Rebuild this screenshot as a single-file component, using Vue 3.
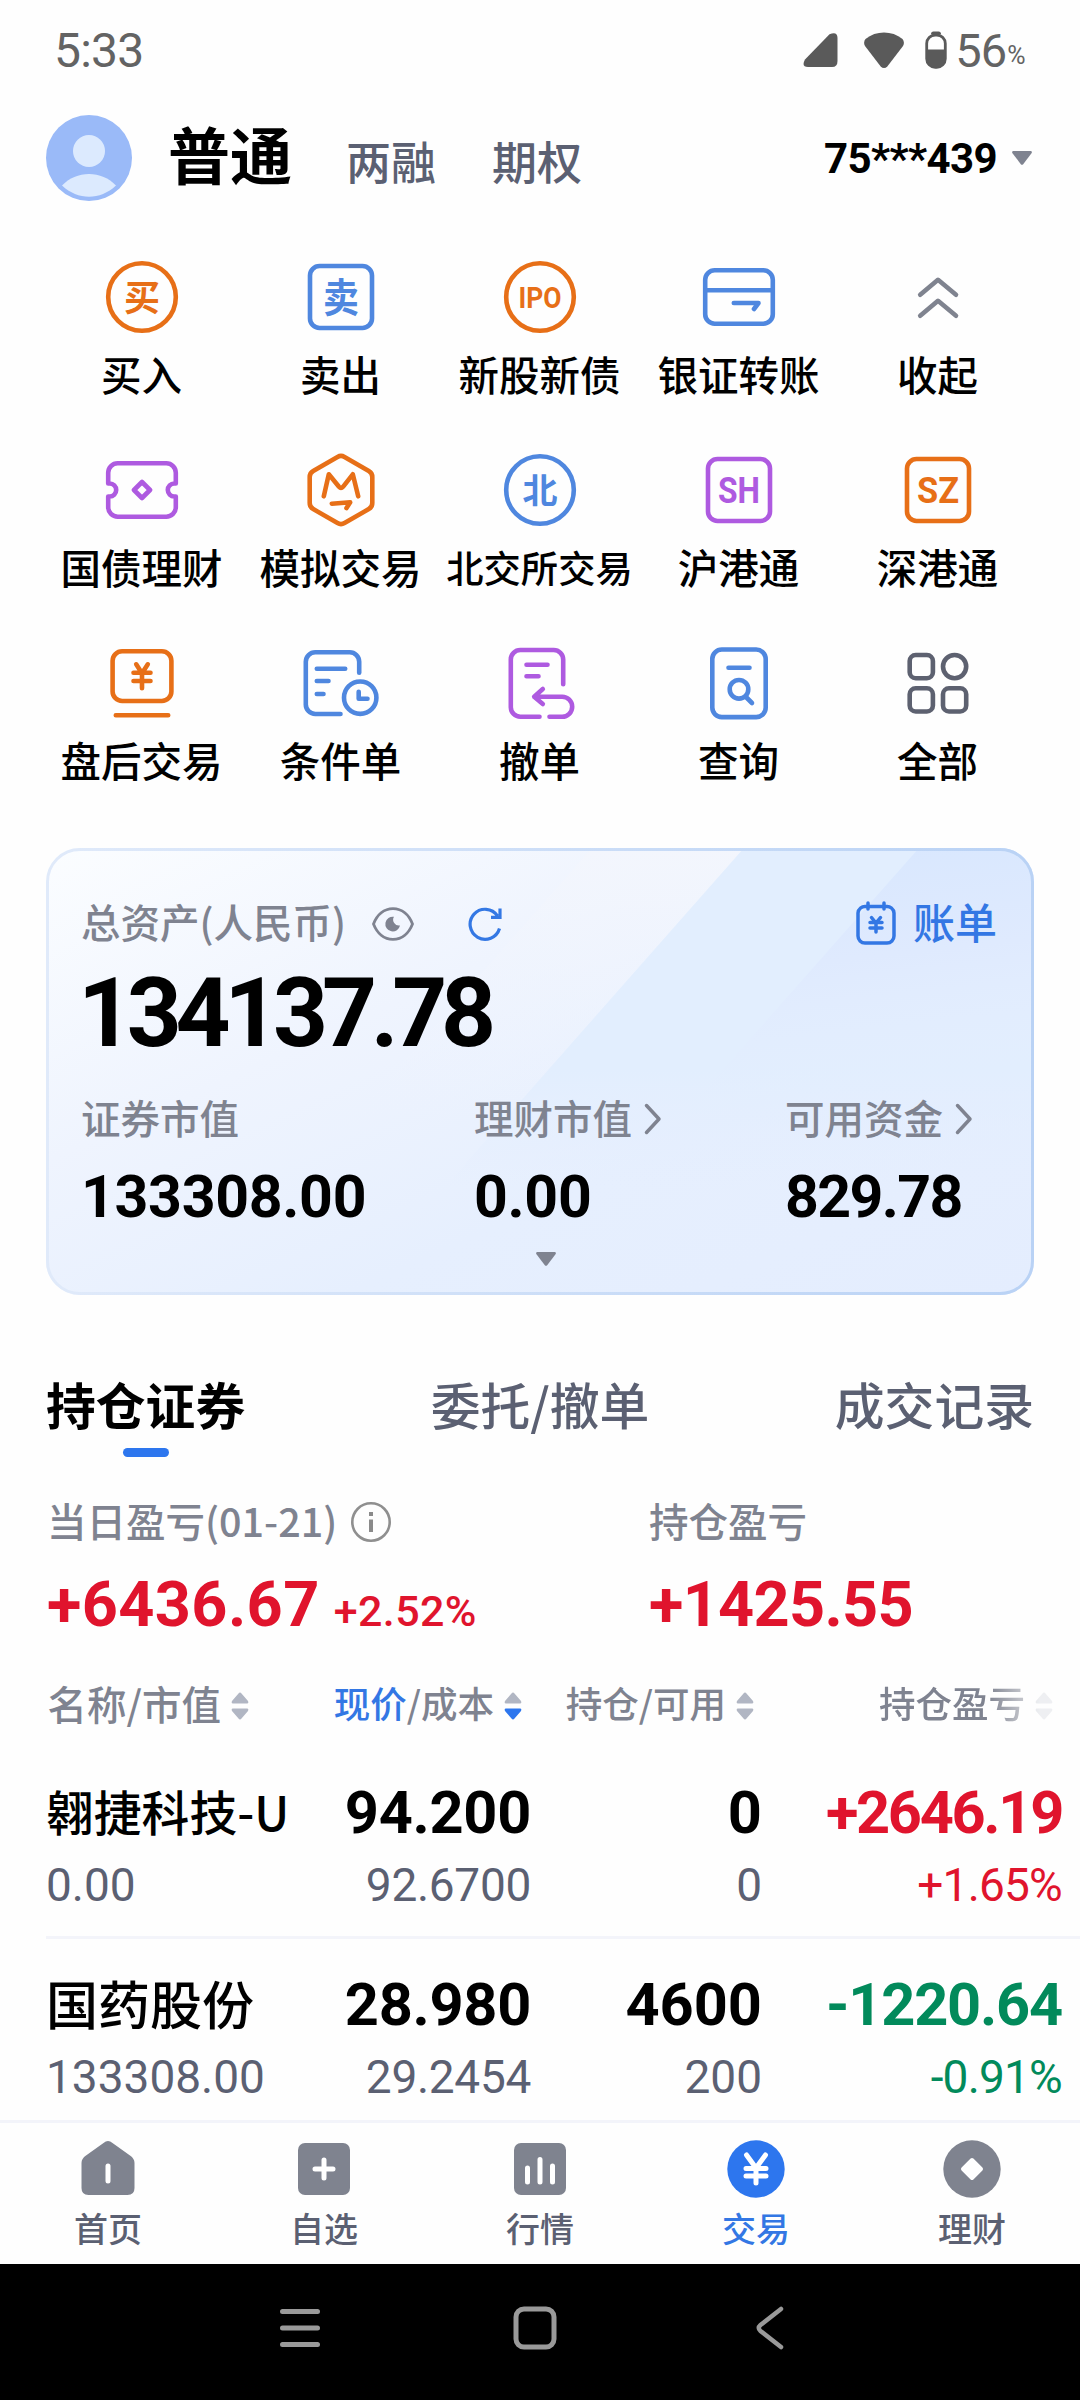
<template>
  <div class="trade-page">
    <!-- Status Bar -->
    <div class="status-bar">
      <span class="status-time">5:33</span>
      <div class="status-icons">
        <svg class="signal-icon" viewBox="0 0 36 36">
          <path d="M26.5 2.2Q34.5-1 34.5 6V29Q34.5 35 29 35H5Q-2 35 2 27.500Z" />
        </svg>
        <svg class="wifi-icon" viewBox="0 0 42 38">
          <path d="M2.500 8C13-.6 29-.6 39.500 8Q42 11 40 15L24.500 35.200Q21 39 17.500 35.200L2 15Q0 11 2.500 8Z" />
        </svg>
        <svg class="battery-icon" viewBox="0 0 22 38">
          <path d="M6 3Q6 .5 8.500 .5h5Q16 .5 16 3Z" />
          <rect x="1.700" y="4" width="18.600" height="32.300" rx="8.500" fill="none" stroke="#5a5a5a" stroke-width="2.800" />
          <path d="M2 18.500H20V28a8.500 8.500 0 0 1-8.500 8.500h-1A8.500 8.500 0 0 1 2 28Z" />
        </svg>
        <span class="battery-level">56</span>
        <span class="battery-unit">%</span>
      </div>
    </div>

    <!-- Account Header -->
    <div class="header">
      <svg class="avatar" viewBox="0 0 86 86">
        <circle cx="43" cy="43" r="43" fill="#9abaf8" />
        <circle cx="43" cy="36" r="16" fill="#dceafe" />
        <path d="M16 70.500C30 55 56 55 70 70.500C54 85.500 32 85.500 16 70.500Z" fill="#dceafe" />
      </svg>
      <span class="account-type active">普通</span>
      <span class="account-type margin">两融</span>
      <span class="account-type option">期权</span>
      <div class="account-id">
        <span>75***439</span>
        <svg class="triangle" viewBox="0 0 20 14"><path d="M1 0H19Q20.500 .8 19.500 2.200L11.200 13.200Q10 14.500 8.800 13.200L.5 2.200Q-.5 .8 1 0Z" /></svg>
      </div>
    </div>

    <!-- Tool Grid -->
    <div class="tool-grid">
      <div v-for="tool in tools" :key="tool.label" class="tool" :class="tool.color">
        <svg class="tool-icon" viewBox="0 0 80 80">
          <rect
            v-for="(r, i) in tool.rects"
            :key="'r' + i"
            :x="r[0]"
            :y="r[1]"
            :width="r[2]"
            :height="r[3]"
            :rx="r[4]"
          />
          <circle v-for="(c, i) in tool.circles" :key="'c' + i" :cx="c[0]" :cy="c[1]" :r="c[2]" />
          <path v-if="tool.path" :d="tool.path" />
          <text
            v-if="tool.text"
            class="tool-glyph"
            x="40"
            :y="tool.text.y"
            :font-size="tool.text.size"
            :textLength="tool.text.width"
            lengthAdjust="spacingAndGlyphs"
          >{{ tool.text.value }}</text>
        </svg>
        <span class="tool-label" :class="{ small: tool.label.length > 4 }">{{ tool.label }}</span>
      </div>
    </div>

    <!-- Asset Card -->
    <div class="asset-card">
      <svg class="card-bg" viewBox="0 0 988 447" preserveAspectRatio="none">
        <defs>
          <linearGradient id="base" x1="0" y1="0" x2="1" y2="1">
            <stop offset="0" stop-color="#fbfdff" />
            <stop offset=".35" stop-color="#eff4fe" />
            <stop offset=".65" stop-color="#e6effe" />
            <stop offset="1" stop-color="#e4edfe" />
          </linearGradient>
          <linearGradient id="bandA" x1="0" y1="0" x2="0" y2="1">
            <stop offset="0" stop-color="#f3f6fd" />
            <stop offset="1" stop-color="#edf3fe" stop-opacity="0" />
          </linearGradient>
          <linearGradient id="bandB" x1="0" y1="0" x2="0" y2="1">
            <stop offset="0" stop-color="#e2eefe" />
            <stop offset=".65" stop-color="#e2eefe" />
            <stop offset="1" stop-color="#e4edfe" stop-opacity="0" />
          </linearGradient>
          <linearGradient id="bandC" x1="0" y1="0" x2=".15" y2="1">
            <stop offset="0" stop-color="#d8e7fe" />
            <stop offset=".5" stop-color="#dfeafe" />
            <stop offset="1" stop-color="#e4edfe" stop-opacity="0" />
          </linearGradient>
          <linearGradient id="edge" x1="0" y1="0" x2="1" y2="0">
            <stop offset="0" stop-color="#e0eafa" />
            <stop offset="1" stop-color="#b9d2f5" />
          </linearGradient>
          <clipPath id="cardShape"><rect width="988" height="447" rx="34" /></clipPath>
        </defs>
        <g clip-path="url(#cardShape)">
          <rect width="988" height="447" fill="url(#base)" />
          <path d="M546 0H698L458 272H306Z" fill="url(#bandA)" />
          <path d="M698 0H988V340H398Z" fill="url(#bandB)" />
          <path d="M873 0H988V250H652Z" fill="url(#bandC)" />
        </g>
        <rect x="1.500" y="1.500" width="985" height="444" rx="32.500" fill="none" stroke="url(#edge)" stroke-width="3" />
      </svg>

      <div class="card-content">
        <div class="card-top">
          <span class="card-label">总资产(人民币)</span>
          <svg class="eye-icon" viewBox="0 0 42 34">
            <path d="M1.500 17C5 8 12 1.600 21 1.600S37 8 40.500 17C37 26 30 32.400 21 32.400S5 26 1.500 17Z" fill="none" stroke="#7f8390" stroke-width="2.800" />
            <path d="M22 9.800A7.400 7.400 0 1 0 28 18.500A5.800 5.800 0 0 1 22 9.800Z" fill="#7f8390" />
          </svg>
          <svg class="refresh-icon" viewBox="0 0 34 36">
            <path d="M31.500 22.500A15 15 0 1 1 29.500 9.800M32 2.500V11.300H23" />
          </svg>
          <div class="bill">
            <svg class="bill-icon" viewBox="0 0 40 44">
              <path d="M10 5.500A7 7 0 0 0 2 12V35A7 7 0 0 0 9 42H31A7 7 0 0 0 38 35V12A7 7 0 0 0 30 5.500M10 5.500H30M12 2V8M28 2V8" />
              <path d="M15.500 16.500L20 22L24.500 16.500M20 22V31M14 21.500H26M14 27H26" />
            </svg>
            <span>账单</span>
          </div>
        </div>
        <div class="total">134137.78</div>
        <div class="asset-stats">
          <div v-for="stat in stats" :key="stat.label" class="stat">
            <div class="stat-label">
              <span>{{ stat.label }}</span>
              <svg v-if="stat.link" class="chevron" viewBox="0 0 18 32"><path d="M2.500 2.500L15 16L2.500 29.500" /></svg>
            </div>
            <div class="stat-value" :class="{ tight: stat.tight }">{{ stat.value }}</div>
          </div>
        </div>
        <svg class="triangle expand" viewBox="0 0 20 14"><path d="M1 0H19Q20.500 .8 19.500 2.200L11.200 13.200Q10 14.500 8.800 13.200L.5 2.200Q-.5 .8 1 0Z" /></svg>
      </div>
    </div>

    <!-- Tabs -->
    <div class="tabs">
      <div class="tab active">持仓证券</div>
      <div class="tab">委托/撤单</div>
      <div class="tab">成交记录</div>
    </div>

    <!-- Profit Summary -->
    <div class="summary">
      <div class="summary-day">
        <div class="summary-label">
          <span>当日盈亏(01-21)</span>
          <svg class="info-icon" viewBox="0 0 40 40">
            <circle cx="20" cy="20" r="18.700" fill="none" stroke="#8f8f8f" stroke-width="2.600" />
            <path d="M18 10h4v4h-4zM18 17.500h4V30h-4z" fill="#8a8a8a" />
          </svg>
        </div>
        <div class="summary-value">
          <span class="amount">+6436.67</span>
          <span class="percent">+2.52%</span>
        </div>
      </div>
      <div>
        <div class="summary-label">持仓盈亏</div>
        <div class="summary-value"><span class="amount tight">+1425.55</span></div>
      </div>
    </div>

    <!-- Holdings -->
    <div class="table-head">
      <div v-for="col in columns" :key="col.name" class="head-cell" :class="col.name">
        <span><em v-if="col.active">{{ col.active }}</em>{{ col.label }}</span>
        <svg class="sort-icon" viewBox="0 0 18 28">
          <path d="M7.500 1.500Q9-.6 10.500 1.500L17 9Q18 11.500 16 11.500H2Q0 11.500 1 9Z" />
          <path :class="{ on: col.active }" d="M7.500 26.500Q9 28.600 10.500 26.500L17 19Q18 16.500 16 16.500H2Q0 16.500 1 19Z" />
        </svg>
      </div>
    </div>
    <div class="holdings">
      <div v-for="row in holdings" :key="row.name" class="holding">
        <div class="cell name">
          <div class="main stock" :class="{ long: row.name.length > 4 }">{{ row.name }}</div>
          <div class="sub">{{ row.value }}</div>
        </div>
        <div class="cell price">
          <div class="main">{{ row.price }}</div>
          <div class="sub">{{ row.cost }}</div>
        </div>
        <div class="cell amount-col">
          <div class="main">{{ row.amount }}</div>
          <div class="sub">{{ row.available }}</div>
        </div>
        <div class="cell profit" :class="row.trend">
          <div class="main">{{ row.profit }}</div>
          <div class="sub">{{ row.rate }}</div>
        </div>
      </div>
    </div>

    <!-- Bottom Tab Bar -->
    <div class="tab-bar">
      <div class="tab-item">
        <svg viewBox="0 0 58 58">
          <path d="M24.500 3Q29-.8 33.500 3L51 15.500Q55.500 18.500 55.500 23V48Q55.500 55 48.500 55H9.500Q2.500 55 2.500 48V23Q2.500 18.500 7 15.500Z" />
          <path class="cut" d="M29 26V41" />
        </svg>
        <span>首页</span>
      </div>
      <div class="tab-item">
        <svg viewBox="0 0 58 58">
          <rect x="3" y="3" width="52" height="52" rx="7" />
          <path class="cut" d="M29 20V38M20 29H38" />
        </svg>
        <span>自选</span>
      </div>
      <div class="tab-item">
        <svg viewBox="0 0 58 58">
          <rect x="3" y="3" width="52" height="52" rx="7" />
          <path class="cut" d="M16.500 28V42M29 19.500V42M41.500 26V42" />
        </svg>
        <span>行情</span>
      </div>
      <div class="tab-item active">
        <svg viewBox="0 0 58 58">
          <circle cx="29" cy="29" r="28.700" />
          <path class="cut" d="M19.500 15L29 28L38.500 15M29 28V43M19 28.500H39M19 36H39" />
        </svg>
        <span>交易</span>
      </div>
      <div class="tab-item">
        <svg viewBox="0 0 58 58">
          <circle cx="29" cy="29" r="28.700" />
          <path class="diamond" d="M29 20L38 29L29 38L20 29Z" />
        </svg>
        <span>理财</span>
      </div>
    </div>

    <!-- System Navigation -->
    <div class="system-nav">
      <svg viewBox="0 0 44 44"><path d="M4.500 5.500H39.500M4.500 22H39.500M4.500 38.500H39.500" stroke-width="5" /></svg>
      <svg viewBox="0 0 44 44"><rect x="3" y="3" width="38" height="38" rx="8" stroke-width="5" /></svg>
      <svg viewBox="0 0 44 44"><path d="M33 3L12.500 19Q9 22 12.500 25L33 41" stroke-width="4.500" /></svg>
    </div>
  </div>
</template>

<script setup>
const tools = [
  { label: '买入', color: 'orange', circles: [[40, 40, 33.8]], text: { value: '买', size: 36, y: 53.5, width: 36 } },
  { label: '卖出', color: 'blue', rects: [[9, 9, 62, 62, 9.5]], text: { value: '卖', size: 40, y: 55, width: 36 } },
  { label: '新股新债', color: 'orange', circles: [[40, 40, 33.8]], text: { value: 'IPO', size: 30, y: 50.5, width: 43 } },
  {
    label: '银证转账',
    color: 'blue',
    rects: [[6.2, 13.3, 67.6, 53.4, 9.5]],
    path: 'M6.2 33.3H73.8M34.8 46H59.5L55 52'
  },
  { label: '收起', color: 'gray', path: 'M22.2 37.7L40 22.8L58 37.7M22.2 58.7L40 43.8L58 58.7' },
  {
    label: '国债理财',
    color: 'purple',
    path: 'M6.2 33.5V22.8a9.500 9.500 0 0 1 9.500-9.500H64.300a9.500 9.500 0 0 1 9.500 9.500V33.500H72.300a6.500 6.500 0 0 0 0 13H73.800V57.200a9.500 9.500 0 0 1-9.500 9.500H15.700a9.500 9.500 0 0 1-9.500-9.500V46.500H7.700a6.500 6.500 0 0 0 0-13ZM40 32L48 40L40 48L32 40Z'
  },
  {
    label: '模拟交易',
    color: 'orange',
    path: 'M36.500 6.900a7 7 0 0 1 7 0L67.800 20.900a7 7 0 0 1 3.500 6.100V53a7 7 0 0 1-3.500 6.100L43.500 73.100a7 7 0 0 1-7 0L12.200 59.100a7 7 0 0 1-3.500-6.100V27a7 7 0 0 1 3.500-6.100ZM22.800 46.300L27.800 24.300L38 36.800Q40 39 42 36.800L51.800 24.300L57.200 46.300M30.800 53.700L49.200 52.300L45.500 58'
  },
  { label: '北交所交易', color: 'blue', circles: [[40, 40, 33.8]], text: { value: '北', size: 34, y: 52.5, width: 35 } },
  { label: '沪港通', color: 'purple', rects: [[9, 9, 62, 62, 9.5]], text: { value: 'SH', size: 36, y: 53, width: 42 } },
  { label: '深港通', color: 'orange', rects: [[9, 9, 62, 62, 9.5]], text: { value: 'SZ', size: 36, y: 53, width: 42 } },
  {
    label: '盘后交易',
    color: 'orange',
    rects: [[10.6, 8.3, 58.8, 49.7, 9.5]],
    path: 'M13.800 72.300H66.200M34.200 21.300L40 30.300L45.800 21.300M40 30.300V45.300M31.500 29.700H48.500M31.500 38H48.500'
  },
  {
    label: '条件单',
    color: 'blue',
    circles: [[59.2, 54.7, 16.2]],
    path: 'M58.200 29.700V18.800a9.500 9.500 0 0 0-9.500-9.500H14.300a9.500 9.500 0 0 0-9.500 9.500V61.500a9.500 9.500 0 0 0 9.500 9.500H39.500M15.800 25.700H44.200M15.800 38H27.500M15.800 51H22.500M57.700 48.700V55.700H66.500'
  },
  {
    label: '撤单',
    color: 'purple',
    path: 'M63.200 41.300V16.500a9.500 9.500 0 0 0-9.500-9.500H20.300a9.500 9.500 0 0 0-9.500 9.500V64.200a9.500 9.500 0 0 0 9.500 9.500H39.500M26.500 21.700H47.500M26.500 33.300H38.500M42.800 46L34.200 53.700L42.800 61M34.200 53.700H62.200a10 10 0 0 1 0 20H49.500'
  },
  {
    label: '查询',
    color: 'blue',
    rects: [[13.3, 6.5, 53.4, 67.6, 9.5]],
    circles: [[40, 46.3, 9.3]],
    path: 'M29.500 24.700H50.500M47 54L53 60'
  },
  {
    label: '全部',
    color: 'slate',
    rects: [[11.7, 12, 23.2, 23.2, 6], [11.7, 45.3, 23.2, 23.2, 6], [45, 45.3, 23.2, 23.2, 6]],
    circles: [[56.6, 23.6, 11.6]]
  }
]

const stats = [
  { label: '证券市值', value: '133308.00' },
  { label: '理财市值', value: '0.00', link: true },
  { label: '可用资金', value: '829.78', link: true, tight: true }
]

const columns = [
  { name: 'name', label: '名称/市值' },
  { name: 'price', active: '现价', label: '/成本' },
  { name: 'amount-col', label: '持仓/可用' },
  { name: 'profit', label: '持仓盈亏' }
]

const holdings = [
  {
    name: '翱捷科技-U',
    value: '0.00',
    price: '94.200',
    cost: '92.6700',
    amount: '0',
    available: '0',
    profit: '+2646.19',
    rate: '+1.65%',
    trend: 'up'
  },
  {
    name: '国药股份',
    value: '133308.00',
    price: '28.980',
    cost: '29.2454',
    amount: '4600',
    available: '200',
    profit: '-1220.64',
    rate: '-0.91%',
    trend: 'down'
  }
]
</script>

<style>
body {
  margin: 0;
  background: #ffffff;
}
</style>

<style scoped>
.trade-page {
  --font-cjk: 'Noto Sans CJK SC', sans-serif;
  --font-num: Roboto, 'Noto Sans CJK SC', sans-serif;
  --color-gray: #7f8390;
  --color-slate: #5b6072;
  --color-blue: #2d76ee;
  --color-red: #e0142d;
  --color-green: #028a5b;

  display: flex;
  flex-direction: column;
  width: 1080px;
  height: 2400px;
  overflow: hidden;
  background: #fefefe;
  color: #000000;
  font-family: var(--font-cjk);
  white-space: nowrap;
}

.trade-page * {
  box-sizing: border-box;
}

svg {
  display: block;
  flex-shrink: 0;
}

/* Status Bar */
.status-bar {
  display: flex;
  align-items: center;
  justify-content: space-between;
  height: 100px;
  padding: 0 55px 0 54px;
  flex-shrink: 0;
  font-family: var(--font-num);
  color: #636363;
}

.status-time {
  font-size: 48px;
  letter-spacing: -0.8px;
}

.status-icons {
  display: flex;
  align-items: center;
  fill: #5a5a5a;
}

.signal-icon {
  width: 36px;
  height: 36px;
  margin-right: 24px;
}

.wifi-icon {
  width: 42px;
  height: 38px;
  margin-right: 20px;
}

.battery-icon {
  width: 22px;
  height: 38px;
  margin-right: 8px;
}

.battery-level {
  font-size: 47px;
  letter-spacing: -1px;
}

.battery-unit {
  font-size: 25px;
  margin: 11px 0 0 1px;
  letter-spacing: -0.5px;
}

/* Account Header */
.header {
  display: flex;
  align-items: center;
  height: 116px;
  padding: 0 48px 0 46px;
  flex-shrink: 0;
}

.avatar {
  width: 86px;
  height: 86px;
}

.account-type {
  font-size: 45px;
  font-weight: 500;
  line-height: 60px;
  color: var(--color-slate);
}

.account-type.active {
  width: 124px;
  margin: -10px 0 0 36px;
  font-size: 62px;
  font-weight: 700;
  color: #000000;
}

.account-type.margin {
  margin: 6px 0 0 54px;
}

.account-type.option {
  margin: 6px 0 0 56px;
}

.account-id {
  display: flex;
  align-items: center;
  gap: 15px;
  margin-left: auto;
  font-family: var(--font-num);
  font-size: 42px;
  font-weight: 700;
  letter-spacing: -0.6px;
}

.triangle {
  width: 20px;
  height: 14px;
  fill: var(--color-gray);
}

/* Tool Grid */
.tool-grid {
  display: grid;
  grid-template-columns: repeat(5, 199px);
  grid-auto-rows: 193px;
  padding: 0 42px;
  margin-top: 41px;
  flex-shrink: 0;
}

.tool {
  display: flex;
  flex-direction: column;
  align-items: center;
}

.tool-icon {
  width: 80px;
  height: 80px;
  fill: none;
  stroke: currentColor;
  stroke-width: 4.600;
  stroke-linecap: round;
  stroke-linejoin: round;
}

.tool-glyph {
  fill: currentColor;
  stroke: none;
  font-family: var(--font-num);
  font-weight: 700;
  text-anchor: middle;
}

.orange {
  color: #e76f17;
}

.blue {
  color: #4f87df;
}

.purple {
  color: #ae5ae0;
}

.gray {
  color: #7f838f;
}

.slate {
  color: #5d6170;
}

.tool-label {
  margin-top: 12px;
  font-size: 40.500px;
  font-weight: 500;
  line-height: 50px;
  color: #000000;
}

.tool-label.small {
  font-size: 37.300px;
}

/* Asset Card */
.asset-card {
  position: relative;
  width: 988px;
  height: 447px;
  margin: 12px 0 0 46px;
  flex-shrink: 0;
}

.card-bg {
  position: absolute;
  inset: 0;
  width: 100%;
  height: 100%;
}

.card-content {
  position: relative;
  display: flex;
  flex-direction: column;
  padding: 48px 37px 0 35px;
}

.card-top {
  display: flex;
  align-items: center;
  height: 50px;
  color: var(--color-gray);
}

.card-label {
  width: 265px;
  font-size: 39.500px;
  font-weight: 500;
  line-height: 50px;
}

.eye-icon {
  width: 42px;
  height: 34px;
  margin: 5px 0 0 26px;
}

.refresh-icon {
  width: 34px;
  height: 36px;
  margin: 5px 0 0 54px;
  fill: none;
  stroke: #3478e4;
  stroke-width: 3.200;
}

.bill {
  display: flex;
  align-items: center;
  gap: 17px;
  margin-left: auto;
  font-size: 42px;
  font-weight: 500;
  line-height: 50px;
  color: #3377e4;
}

.bill-icon {
  width: 40px;
  height: 44px;
  margin-top: 4px;
  fill: none;
  stroke: currentColor;
  stroke-width: 3.500;
  stroke-linecap: round;
  stroke-linejoin: round;
}

.total {
  margin: 21px 0 0 -3px;
  font-family: var(--font-num);
  font-size: 96px;
  font-weight: 700;
  line-height: 92px;
  height: 90px;
  letter-spacing: -6.300px;
}

.asset-stats {
  display: grid;
  grid-template-columns: 393px 311px 1fr;
  margin-top: 35px;
}

.stat-label {
  display: flex;
  align-items: center;
  gap: 12px;
  font-size: 39.500px;
  font-weight: 500;
  line-height: 50px;
  color: var(--color-gray);
}

.chevron {
  width: 18px;
  height: 32px;
  margin-top: 4px;
  fill: none;
  stroke: var(--color-gray);
  stroke-width: 3.500;
  stroke-linecap: round;
  stroke-linejoin: round;
}

.stat-value {
  margin-top: 25px;
  font-family: var(--font-num);
  font-size: 59px;
  font-weight: 700;
  line-height: 60px;
  letter-spacing: -0.300px;
}

.stat-value.tight {
  letter-spacing: -1.600px;
}

.expand {
  margin: 25px 0 0 455px;
}

/* Tabs */
.tabs {
  display: flex;
  justify-content: space-between;
  margin-top: 78px;
  padding: 0 46px;
  flex-shrink: 0;
}

.tab {
  height: 84px;
  font-size: 49.800px;
  font-weight: 500;
  line-height: 60px;
  color: var(--color-slate);
}

.tab.active {
  color: #000000;
  font-weight: 700;
}

.tab.active::after {
  content: '';
  display: block;
  width: 46px;
  height: 9px;
  margin: 15px auto 0;
  border-radius: 5px;
  background: var(--color-blue);
}

/* Profit Summary */
.summary {
  display: grid;
  grid-template-columns: 602px 1fr;
  margin-top: 38px;
  padding-left: 47px;
  flex-shrink: 0;
}

.summary-label {
  display: flex;
  align-items: center;
  gap: 14px;
  height: 50px;
  font-size: 39.500px;
  font-weight: 500;
  line-height: 50px;
  color: var(--color-gray);
}

.info-icon {
  width: 40px;
  height: 40px;
  margin-top: 4px;
}

.summary-value {
  display: flex;
  align-items: baseline;
  gap: 14px;
  height: 70px;
  margin-top: 25px;
  font-family: var(--font-num);
  line-height: 70px;
  color: var(--color-red);
}

.amount {
  font-size: 63px;
  font-weight: 700;
  letter-spacing: 0.400px;
}

.amount.tight {
  letter-spacing: -0.700px;
}

.percent {
  font-size: 43px;
  font-weight: 500;
  letter-spacing: 0.400px;
}

/* Holdings */
.table-head {
  display: grid;
  grid-template-columns: 203px 273px 232px 299px;
  height: 50px;
  margin-top: 38px;
  padding-left: 46px;
  flex-shrink: 0;
  font-size: 36.500px;
  font-weight: 500;
  line-height: 50px;
  color: var(--color-gray);
}

.head-cell {
  display: flex;
  align-items: center;
  justify-content: flex-end;
  gap: 10px;
}

.head-cell.name {
  font-size: 39.500px;
}

.head-cell em {
  font-style: normal;
  color: #3377e4;
}

.head-cell.profit {
  mask-image: linear-gradient(to right, #000 78%, rgba(0, 0, 0, 0.2) 96%);
}

.sort-icon {
  width: 18px;
  height: 28px;
  margin-top: 5px;
  fill: #b1b6c3;
}

.sort-icon .on {
  fill: var(--color-blue);
}

.holdings {
  height: 373px;
  margin-top: 19px;
  margin-left: 46px;
  overflow: hidden;
  flex-shrink: 0;
}

.holding {
  display: grid;
  grid-template-columns: 240px 245px 231px 300px;
  height: 192px;
  padding-top: 36px;
  border-bottom: 3px solid #f3f4fa;
  font-family: var(--font-num);
}

.cell {
  text-align: right;
}

.cell.name {
  text-align: left;
}

.main {
  height: 60px;
  font-size: 59.500px;
  font-weight: 700;
  line-height: 60px;
}

.main.stock {
  font-family: var(--font-cjk);
  font-size: 52px;
  font-weight: 500;
  line-height: 56px;
}

.main.stock.long {
  font-size: 47.800px;
}

.sub {
  margin-top: 17px;
  font-size: 46px;
  line-height: 50px;
  color: var(--color-slate);
}

.price .main,
.price .sub {
  letter-spacing: -0.300px;
}

.profit .main {
  letter-spacing: -1.200px;
}

.profit.up .main {
  letter-spacing: -2.300px;
}

.profit .sub {
  letter-spacing: -0.800px;
}

.up .main,
.up .sub {
  color: var(--color-red);
}

.down .main,
.down .sub {
  color: var(--color-green);
}

/* Bottom Tab Bar */
.tab-bar {
  display: grid;
  grid-template-columns: repeat(5, 1fr);
  height: 144px;
  padding-top: 17px;
  border-top: 3px solid #f3f4fa;
  flex-shrink: 0;
}

.tab-item {
  display: flex;
  flex-direction: column;
  align-items: center;
  font-size: 34px;
  font-weight: 500;
  line-height: 46px;
  color: var(--color-slate);
}

.tab-item svg {
  width: 58px;
  height: 58px;
  margin-bottom: 7px;
  fill: #7f838f;
}

.tab-item .cut {
  fill: none;
  stroke: #ffffff;
  stroke-width: 5;
  stroke-linecap: round;
}

.tab-item .diamond {
  fill: #ffffff;
  stroke: #ffffff;
  stroke-width: 4;
  stroke-linejoin: round;
}

.tab-item.active {
  color: #3377e4;
}

.tab-item.active svg {
  fill: var(--color-blue);
}

/* System Navigation */
.system-nav {
  display: flex;
  justify-content: center;
  gap: 191px;
  height: 136px;
  padding: 42px 10px 0 0;
  flex-shrink: 0;
  background: #000000;
}

.system-nav svg {
  width: 44px;
  height: 44px;
  fill: none;
  stroke: #999999;
  stroke-linecap: round;
}
</style>
